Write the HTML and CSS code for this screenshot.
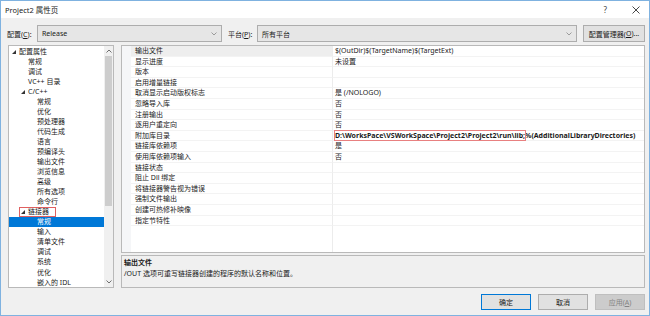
FILE: index.html
```html
<!DOCTYPE html>
<html>
<head>
<meta charset="utf-8">
<link rel="stylesheet" href="styles.css">
</head>
<body>
<div class="window">
  <div class="titlebar">
    <span class="title">Project2 属性页</span>
    <span class="tb-help">?</span>
    <svg class="tb-close" width="8" height="8" viewBox="0 0 8 8"><path d="M0.5 0.5L7.5 7.5M7.5 0.5L0.5 7.5" stroke="#333" stroke-width="0.9" fill="none"/></svg>
  </div>
  <div class="toolbar">
    <span class="lbl lbl-config">配置(<u>C</u>):</span>
    <div class="select sel-config"><span>Release</span><svg class="chev" width="6" height="4" viewBox="0 0 6 4"><path d="M0.5 0.5L3 3L5.5 0.5" stroke="#888" stroke-width="0.8" fill="none"/></svg></div>
    <span class="lbl lbl-plat">平台(<u>P</u>):</span>
    <div class="select sel-plat"><span>所有平台</span><svg class="chev" width="6" height="4" viewBox="0 0 6 4"><path d="M0.5 0.5L3 3L5.5 0.5" stroke="#888" stroke-width="0.8" fill="none"/></svg></div>
    <div class="btn btn-mgr">配置管理器(<u>O</u>)...</div>
  </div>
  <div class="main">
    <div class="tree">
      <div class="tree-list">
        <div class="ti l0"><svg class="tri" width="4" height="4" viewBox="0 0 4 4"><polygon points="4,0 4,4 0,4" fill="#333"/></svg>配置属性</div>
        <div class="ti l1">常规</div>
        <div class="ti l1">调试</div>
        <div class="ti l1">VC++ 目录</div>
        <div class="ti l1x"><svg class="tri" width="4" height="4" viewBox="0 0 4 4"><polygon points="4,0 4,4 0,4" fill="#333"/></svg>C/C++</div>
        <div class="ti l2">常规</div>
        <div class="ti l2">优化</div>
        <div class="ti l2">预处理器</div>
        <div class="ti l2">代码生成</div>
        <div class="ti l2">语言</div>
        <div class="ti l2">预编译头</div>
        <div class="ti l2">输出文件</div>
        <div class="ti l2">浏览信息</div>
        <div class="ti l2">高级</div>
        <div class="ti l2">所有选项</div>
        <div class="ti l2">命令行</div>
        <div class="ti l1x"><span class="redbox"><svg class="tri" width="4" height="4" viewBox="0 0 4 4"><polygon points="4,0 4,4 0,4" fill="#333"/></svg>链接器</span></div>
        <div class="ti l2 selected">常规</div>
        <div class="ti l2">输入</div>
        <div class="ti l2">清单文件</div>
        <div class="ti l2">调试</div>
        <div class="ti l2">系统</div>
        <div class="ti l2">优化</div>
        <div class="ti l2">嵌入的 IDL</div>
      </div>
      <div class="scrollbar">
        <svg class="sb-arrow" width="6" height="4" viewBox="0 0 6 4"><path d="M0.5 3.5L3 1L5.5 3.5" stroke="#606060" stroke-width="0.9" fill="none"/></svg>
        <div class="sb-track"><div class="sb-thumb"></div></div>
        <svg class="sb-arrow" width="6" height="4" viewBox="0 0 6 4"><path d="M0.5 0.5L3 3L5.5 0.5" stroke="#606060" stroke-width="0.9" fill="none"/></svg>
      </div>
    </div>
    <div class="right">
      <div class="grid">
        <div class="row sel"><div class="gutter"></div><div class="name">输出文件</div><div class="value">$(OutDir)$(TargetName)$(TargetExt)</div></div>
        <div class="row"><div class="gutter"></div><div class="name">显示进度</div><div class="value">未设置</div></div>
        <div class="row"><div class="gutter"></div><div class="name">版本</div><div class="value"></div></div>
        <div class="row"><div class="gutter"></div><div class="name">启用增量链接</div><div class="value"></div></div>
        <div class="row"><div class="gutter"></div><div class="name">取消显示启动版权标志</div><div class="value">是 (/NOLOGO)</div></div>
        <div class="row"><div class="gutter"></div><div class="name">忽略导入库</div><div class="value">否</div></div>
        <div class="row"><div class="gutter"></div><div class="name">注册输出</div><div class="value">否</div></div>
        <div class="row"><div class="gutter"></div><div class="name">逐用户重定向</div><div class="value">否</div></div>
        <div class="row"><div class="gutter"></div><div class="name">附加库目录</div><div class="value bold"><span class="redbox2">D:\WorksPace\VSWorkSpace\Project2\Project2\run\lib;</span>%(AdditionalLibraryDirectories)</div></div>
        <div class="row"><div class="gutter"></div><div class="name">链接库依赖项</div><div class="value">是</div></div>
        <div class="row"><div class="gutter"></div><div class="name">使用库依赖项输入</div><div class="value">否</div></div>
        <div class="row"><div class="gutter"></div><div class="name">链接状态</div><div class="value"></div></div>
        <div class="row"><div class="gutter"></div><div class="name">阻止 Dll 绑定</div><div class="value"></div></div>
        <div class="row"><div class="gutter"></div><div class="name">将链接器警告视为错误</div><div class="value"></div></div>
        <div class="row"><div class="gutter"></div><div class="name">强制文件输出</div><div class="value"></div></div>
        <div class="row"><div class="gutter"></div><div class="name">创建可热修补映像</div><div class="value"></div></div>
        <div class="row"><div class="gutter"></div><div class="name">指定节特性</div><div class="value"></div></div>
        <div class="grid-fill"><div class="gutter"></div><div class="name"></div><div class="value"></div></div>
      </div>
      <div class="desc">
        <div class="desc-title">输出文件</div>
        <div class="desc-text">/OUT 选项可重写链接器创建的程序的默认名称和位置。</div>
      </div>
    </div>
  </div>
  <div class="footer">
    <div class="btn btn-ok">确定</div>
    <div class="btn">取消</div>
    <div class="btn btn-disabled">应用(<u>A</u>)</div>
  </div>
</div>
</body>
</html>
```

FILE: styles.css
```css
* { box-sizing: border-box; }
html, body { margin: 0; padding: 0; }
body {
  width: 650px;
  height: 316px;
  overflow: hidden;
  font-family: "Noto Sans", "Noto Sans CJK SC", sans-serif;
  font-size: 7px;
  color: #1a1a1a;
  background: #f0f0f0;
}
u { text-decoration: underline; }
.window {
  width: 650px;
  height: 316px;
  border: 1px solid #7fb2e0;
  background: #f0f0f0;
  display: flex;
  flex-direction: column;
}
.titlebar {
  height: 17px;
  background: #ffffff;
  display: flex;
  align-items: center;
  padding-left: 4px;
  flex-shrink: 0;
}
.title { font-size: 7.5px; color: #222; flex: 1; }
.tb-help { font-size: 8px; color: #444; margin-right: 25px; }
.tb-close { margin-right: 9px; }
.toolbar {
  margin-top: 7px;
  height: 17px;
  display: flex;
  align-items: center;
  padding-left: 6px;
  flex-shrink: 0;
}
.lbl { font-size: 7px; white-space: nowrap; }
.lbl-config { width: 30px; }
.lbl-plat { width: 29px; margin-left: 6px; }
.select {
  height: 17px;
  background: #e6e6e6;
  border: 1px solid #adadad;
  display: flex;
  align-items: center;
  justify-content: space-between;
  padding: 0 4px 0 4px;
}
.sel-config { width: 185px; }
.sel-plat { width: 320px; }
.chev { margin-right: 0; }
.btn {
  height: 16px;
  width: 50px;
  background: #e1e1e1;
  border: 1px solid #adadad;
  display: flex;
  align-items: center;
  justify-content: center;
  font-size: 7px;
}
.btn-mgr { width: 62px; height: 17px; margin-left: 6px; }
.btn-ok { border-color: #0078d7; }
.btn-disabled { background: #cccccc; border-color: #bfbfbf; color: #838383; }
.main {
  margin-top: 3px;
  height: 243px;
  display: flex;
  padding-left: 7px;
  padding-right: 4px;
  gap: 7px;
  flex-shrink: 0;
}
.tree {
  width: 106px;
  background: #ffffff;
  border: 1px solid #b9b9b9;
  display: flex;
}
.tree-list {
  flex: 1;
  padding-top: 0.5px;
  overflow: hidden;
}
.ti {
  height: 10.05px;
  line-height: 10.05px;
  white-space: nowrap;
  display: flex;
  align-items: center;
}
.tri { margin-right: 3px; flex-shrink: 0; }
.l0 { padding-left: 3px; }
.l1 { padding-left: 19px; }
.l1x { padding-left: 12px; }
.l2 { padding-left: 28px; }
.selected { background: #0078d7; color: #ffffff; }
.redbox {
  display: flex;
  align-items: center;
  border: 1px solid #e06060;
  height: 10px;
  padding: 0 6px 0 1px;
  margin-left: -2px;
}
.scrollbar {
  width: 9px;
  background: #f0f0f0;
  display: flex;
  flex-direction: column;
  align-items: center;
}
.sb-arrow { margin: 3px 0; flex-shrink: 0; }
.sb-track { flex: 1; width: 100%; padding: 0 1px; }
.sb-thumb { height: 150px; background: #cdcdcd; margin-top: 0px; }
.right {
  flex: 1;
  display: flex;
  flex-direction: column;
  gap: 2px;
}
.grid {
  height: 208px;
  background: #ffffff;
  border: 1px solid #b9b9b9;
  display: flex;
  flex-direction: column;
  overflow: hidden;
}
.row {
  height: 10.6px;
  display: flex;
  flex-shrink: 0;
}
.gutter { width: 9px; background: #f5f6f8; flex-shrink: 0; }
.name {
  width: 202px;
  padding-left: 4px;
  line-height: 10.6px;
  white-space: nowrap;
  border-bottom: 1px solid #f3f3f3;
  border-right: 1px solid #ececec;
  flex-shrink: 0;
}
.value {
  flex: 1;
  padding-left: 2px;
  line-height: 10.6px;
  white-space: nowrap;
  border-bottom: 1px solid #f3f3f3;
}
.row.sel .name { background: #eeeeee; }
.grid-fill { flex: 1; display: flex; }
.grid-fill .name, .grid-fill .value { border-bottom: none; }
.bold { font-weight: bold; }
.redbox2 { outline: 1px solid #e88080; outline-offset: 0px; }
.desc {
  height: 33px;
  border: 1px solid #b9b9b9;
  background: #f0f0f0;
  padding: 2px 2px;
}
.desc-title { font-weight: bold; line-height: 10px; }
.desc-text { line-height: 11px; }
.footer {
  margin-top: 6px;
  display: flex;
  justify-content: flex-end;
  gap: 7px;
  padding-right: 4px;
}
```
